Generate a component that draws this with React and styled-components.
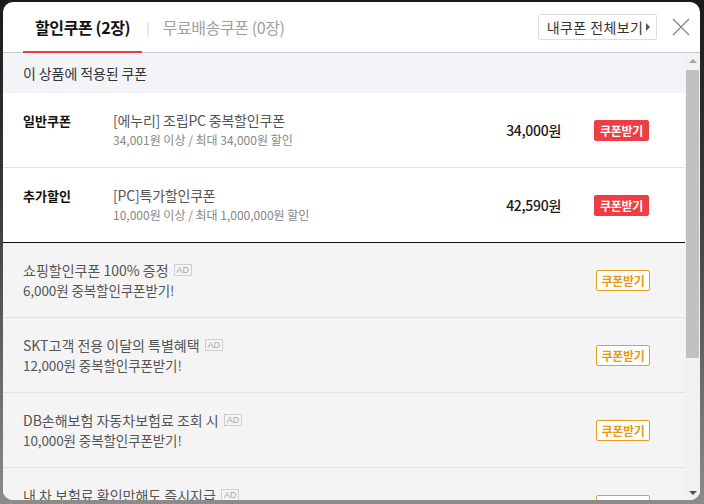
import React from 'react';
import styled, { createGlobalStyle } from 'styled-components';

const GlobalStyle = createGlobalStyle`
  html, body {
    margin: 0;
    padding: 0;
  }
  body {
    font-family: "Noto Sans CJK KR", "Noto Sans", sans-serif;
    background: #777;
  }
  * {
    box-sizing: border-box;
  }
`;

const coupons = [
  { type: '일반쿠폰', title: '[에누리] 조립PC 중복할인쿠폰', cond: '34,001원 이상 / 최대 34,000원 할인', price: '34,000원' },
  { type: '추가할인', title: '[PC]특가할인쿠폰', cond: '10,000원 이상 / 최대 1,000,000원 할인', price: '42,590원' },
];

const ads = [
  { title: '쇼핑할인쿠폰 100% 증정', desc: '6,000원 중복할인쿠폰받기!' },
  { title: 'SKT고객 전용 이달의 특별혜택', desc: '12,000원 중복할인쿠폰받기!' },
  { title: 'DB손해보험 자동차보험료 조회 시', desc: '10,000원 중복할인쿠폰받기!' },
  { title: '내 차 보험료 확인만해도 즉시지급', desc: '5,000원 중복할인쿠폰받기!' },
  { title: 'KB국민카드 첫 결제 고객 혜택', desc: '3,000원 중복할인쿠폰받기!' },
  { title: '신규 가입 회원 웰컴 쿠폰', desc: '2,000원 중복할인쿠폰받기!' },
];

export default function App() {
  return (
    <>
      <GlobalStyle />
      <Backdrop>
        <Modal>
          <Header>
            <Tab active>할인쿠폰 (2장)</Tab>
            <TabDivider>|</TabDivider>
            <Tab>무료배송쿠폰 (0장)</Tab>
            <HeaderRight>
              <AllButton>
                내쿠폰 전체보기
                <Caret />
              </AllButton>
              <CloseButton aria-label="닫기">
                <svg width="18" height="18" viewBox="0 0 18 18">
                  <path d="M1 1 L17 17 M17 1 L1 17" stroke="#8a8a8a" strokeWidth="1.4" fill="none" />
                </svg>
              </CloseButton>
            </HeaderRight>
          </Header>
          <Body>
            <Content>
              <SectionTitle>이 상품에 적용된 쿠폰</SectionTitle>
              {coupons.map((c, i) => (
                <CouponRow key={c.type} last={i === coupons.length - 1}>
                  <CouponMain>
                    <CouponType>{c.type}</CouponType>
                    <CouponInfo>
                      <CouponTitle>{c.title}</CouponTitle>
                      <CouponCond>{c.cond}</CouponCond>
                    </CouponInfo>
                  </CouponMain>
                  <Price>{c.price}</Price>
                  <GetButton>쿠폰받기</GetButton>
                </CouponRow>
              ))}
              {ads.map((a) => (
                <AdRow key={a.title}>
                  <AdInfo>
                    <AdTitle>
                      {a.title}
                      <AdBadge>AD</AdBadge>
                    </AdTitle>
                    <AdDesc>{a.desc}</AdDesc>
                  </AdInfo>
                  <GetButton outline>쿠폰받기</GetButton>
                </AdRow>
              ))}
            </Content>
            <ScrollBar>
              <ScrollArrow dir="up" />
              <ScrollTrack>
                <ScrollThumb />
              </ScrollTrack>
              <ScrollArrow dir="down" />
            </ScrollBar>
          </Body>
        </Modal>
      </Backdrop>
    </>
  );
}

const Backdrop = styled.div`
  width: 704px;
  height: 504px;
  padding: 2px 4px 4px 3px;
  background: linear-gradient(to bottom, #1c1a18 0%, #3a3a3a 40%, #8c8c8c 100%);
`;

const Modal = styled.div`
  width: 697px;
  height: 498px;
  background: #fff;
  border-radius: 10px;
  overflow: hidden;
  display: flex;
  flex-direction: column;
`;

const Header = styled.div`
  flex: none;
  height: 51px;
  display: flex;
  align-items: stretch;
  padding: 0 9px 0 20px;
  border-bottom: 1px solid #c6cad4;
`;

const Tab = styled.div`
  display: flex;
  align-items: center;
  padding: 0 ${({ active }) => (active ? '12px' : '10px')};
  font-size: 16px;
  letter-spacing: -0.4px;
  font-weight: ${({ active }) => (active ? 700 : 400)};
  color: ${({ active }) => (active ? '#111' : '#a0a0a0')};
  border-bottom: 2px solid ${({ active }) => (active ? '#ee3b44' : 'transparent')};
  margin-bottom: -1px;
`;

const TabDivider = styled.span`
  display: flex;
  align-items: center;
  font-size: 13px;
  color: #d0d0d0;
  padding: 0 3px 0 4px;
`;

const HeaderRight = styled.div`
  margin-left: auto;
  display: flex;
  align-items: center;
  gap: 14px;
  padding-bottom: 1px;
`;

const AllButton = styled.button`
  height: 26px;
  width: 119px;
  display: flex;
  align-items: center;
  justify-content: center;
  gap: 3px;
  padding: 0 3px 0 5px;
  background: #fff;
  border: 1px solid #dcdcdc;
  border-radius: 2px;
  font-family: inherit;
  font-size: 14px;
  letter-spacing: 0.4px;
  color: #333;
`;

const Caret = styled.span`
  width: 0;
  height: 0;
  border-top: 4px solid transparent;
  border-bottom: 4px solid transparent;
  border-left: 4px solid #555;
`;

const CloseButton = styled.button`
  width: 20px;
  height: 20px;
  padding: 0;
  border: 0;
  background: none;
  display: flex;
  align-items: center;
  justify-content: center;
`;

const Body = styled.div`
  flex: 1;
  min-height: 0;
  display: flex;
  background: #f4f4f4;
`;

const Content = styled.div`
  flex: 1;
  overflow: hidden;
`;

const ScrollBar = styled.div`
  flex: none;
  width: 15px;
  display: flex;
  flex-direction: column;
  background: #f1f1f1;
`;

const ScrollArrow = styled.div`
  flex: none;
  height: 15px;
  display: flex;
  align-items: center;
  justify-content: center;
  &::before {
    content: '';
    width: 0;
    height: 0;
    border-left: 4px solid transparent;
    border-right: 4px solid transparent;
    ${({ dir }) =>
      dir === 'up'
        ? 'border-bottom: 4px solid #a3a3a3;'
        : 'border-top: 4px solid #505050;'}
  }
`;

const ScrollTrack = styled.div`
  flex: 1;
  padding: 2px 1px 0;
`;

const ScrollThumb = styled.div`
  height: 288px;
  background: #c1c1c1;
`;

const SectionTitle = styled.div`
  height: 40px;
  display: flex;
  align-items: center;
  padding-left: 20px;
  background: #f3f4f8;
  font-size: 14px;
  letter-spacing: -0.1px;
  color: #333;
`;

const CouponRow = styled.div`
  height: 75px;
  display: flex;
  align-items: center;
  padding: 0 36px 0 20px;
  background: #fff;
  border-bottom: 1px solid ${({ last }) => (last ? '#111' : '#e2e3ea')};
`;

const CouponMain = styled.div`
  flex: 1;
  display: flex;
  align-items: flex-start;
`;

const CouponType = styled.div`
  width: 90px;
  font-size: 13px;
  line-height: 19px;
  font-weight: 700;
  color: #111;
`;

const CouponInfo = styled.div`
  display: flex;
  flex-direction: column;
`;

const CouponTitle = styled.div`
  font-size: 14px;
  line-height: 19px;
  letter-spacing: -0.2px;
  color: #555;
`;

const CouponCond = styled.div`
  font-size: 12px;
  line-height: 19px;
  color: #888;
`;

const Price = styled.div`
  font-size: 14px;
  font-weight: 500;
  letter-spacing: -0.3px;
  color: #1a1a1a;
  margin-right: 33px;
`;

const GetButton = styled.button`
  width: ${({ outline }) => (outline ? '54px' : '55px')};
  height: 21px;
  padding: 0;
  border-radius: 2px;
  font-family: inherit;
  font-size: 12px;
  font-weight: 700;
  letter-spacing: -0.3px;
  background: ${({ outline }) => (outline ? '#fff' : '#ee3e45')};
  color: ${({ outline }) => (outline ? '#e39a16' : '#fff')};
  border: 1px solid ${({ outline }) => (outline ? '#e8a01e' : '#ee3e45')};
  display: flex;
  align-items: center;
  justify-content: center;
`;

const AdRow = styled.div`
  height: 75px;
  display: flex;
  align-items: center;
  padding: 0 35px 0 20px;
  background: #f4f4f4;
  border-bottom: 1px solid #e1e3ec;
`;

const AdInfo = styled.div`
  flex: 1;
  display: flex;
  flex-direction: column;
`;

const AdTitle = styled.div`
  display: flex;
  align-items: center;
  font-size: 14px;
  line-height: 20px;
  letter-spacing: 0;
  color: #555;
`;

const AdBadge = styled.span`
  margin-left: 5px;
  height: 12px;
  padding: 0 2px;
  border: 1px solid #cfcfcf;
  font-family: "Liberation Sans", sans-serif;
  font-size: 9px;
  line-height: 10px;
  color: #aaa;
`;

const AdDesc = styled.div`
  font-size: 13.5px;
  line-height: 20px;
  letter-spacing: -0.1px;
  color: #555;
`;
